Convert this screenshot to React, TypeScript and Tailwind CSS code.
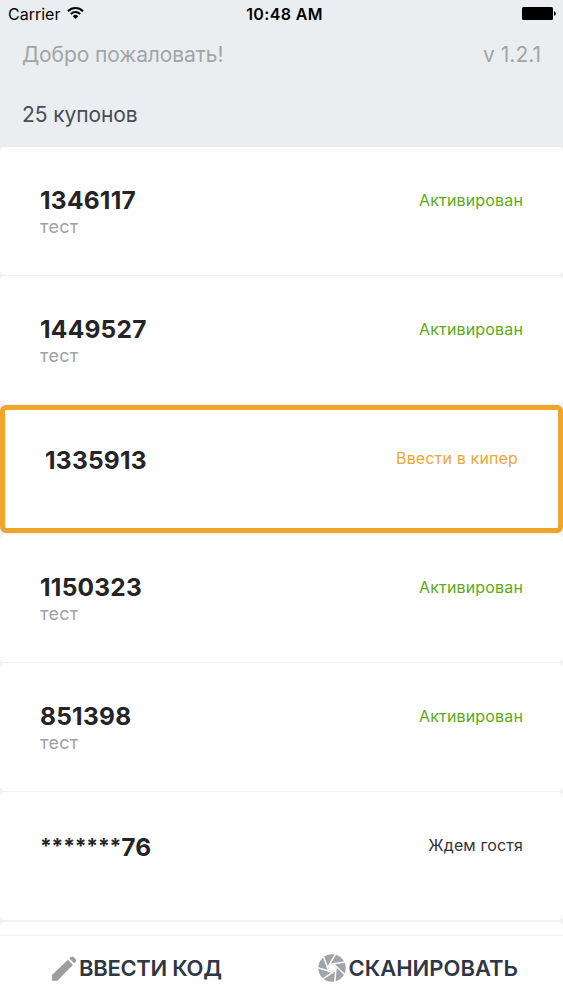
type Coupon = { id: string; note?: string; status: "active" | "enter" | "waiting" };

const coupons: Coupon[] = [
  { id: "1346117", note: "тест", status: "active" },
  { id: "1449527", note: "тест", status: "active" },
  { id: "1335913", status: "enter" },
  { id: "1150323", note: "тест", status: "active" },
  { id: "851398", note: "тест", status: "active" },
  { id: "*******76", status: "waiting" },
];

const statuses = {
  active: { label: "Активирован", className: "text-[#5bab18] tracking-[0.15px]" },
  enter: { label: "Ввести в кипер", className: "text-[#eba83a] tracking-[0.15px]" },
  waiting: { label: "Ждем гостя", className: "text-[#333338] tracking-[0.15px]" },
};

function StatusBar() {
  return (
    <div className="grid h-7 shrink-0 grid-cols-3 items-center pl-2 pr-[7px] text-black">
      <div className="flex items-center gap-[7px]">
        <span className="text-[16px] leading-7">Carrier</span>
        <svg className="-mt-[2px]" width="17" height="12" viewBox="0 0 17 12" fill="none" stroke="currentColor" strokeWidth="2">
          <path d="M1 4.2a10.6 10.6 0 0 1 15 0" />
          <path d="M3.9 7a6.5 6.5 0 0 1 9.2 0" />
          <path d="M8.5 12 5.8 9.2a3.8 3.8 0 0 1 5.4 0Z" fill="currentColor" stroke="none" />
        </svg>
      </div>
      <span className="whitespace-nowrap pl-[5px] text-center text-[16px] font-semibold leading-7 tracking-[0.35px]">10:48 AM</span>
      <svg className="-mt-px justify-self-end" width="34" height="13" viewBox="0 0 34 13">
        <rect width="31" height="13" rx="1.5" />
        <path d="M32 4.2c2.4.6 2.4 4 0 4.6Z" />
      </svg>
    </div>
  );
}

function PencilIcon() {
  return (
    <svg width="25" height="25" viewBox="0 0 25 25" fill="currentColor" className="text-[#9d9da0]">
      <path d="M0 24.7v-5.6L15.9 3.7l5 5L5.5 24.7Z" />
      <path d="m17.3 2.5 1.4-1.4q1.4-1.2 2.8 0l2 2q1.2 1.4 0 2.8l-1.4 1.4Z" />
    </svg>
  );
}

const bladeAngles = Array.from({ length: 7 }, (_, i) => (i * 360) / 7);

function ApertureIcon() {
  return (
    <svg width="28" height="28" viewBox="-14 -14 28 28" className="text-[#a0a3a9]">
      <circle r="13.7" fill="currentColor" />
      <circle r="3.2" fill="white" />
      {bladeAngles.map((angle) => (
        <path key={angle} d="M-1.5-4H14" stroke="white" strokeWidth="1.5" transform={`rotate(${angle - 8})`} />
      ))}
    </svg>
  );
}

function CouponCard({ coupon }: { coupon: Coupon }) {
  const status = statuses[coupon.status];
  const highlighted = coupon.status === "enter";
  const masked = coupon.id.match(/^\*+/)?.[0] ?? "";
  return (
    <li
      className={
        highlighted
          ? "flex h-32 shrink-0 items-start justify-between rounded-md border-[5px] border-[#f0a52a] bg-white px-10 pt-[33px]"
          : "flex h-32 shrink-0 items-start justify-between rounded-[5px] bg-white px-10 pt-[38px]"
      }
    >
      <div className={coupon.note ? "" : "pt-[2px]"}>
        <div className="text-[24.5px] font-bold leading-[30px] tracking-[0.25px] text-[#242428]">
          {masked && <span className="align-[2px] text-[21px] leading-none tracking-[-0.15px]">{masked}</span>}
          {coupon.id.slice(masked.length)}
        </div>
        {coupon.note && <div className="text-[18px] leading-[23px] tracking-[0.3px] text-[#a1a1a6]">{coupon.note}</div>}
      </div>
      <span className={`text-[16px] leading-[30px] ${status.className}`}>{status.label}</span>
    </li>
  );
}

export default function App() {
  return (
    <main className="flex h-[1000px] w-[563px] flex-col overflow-hidden bg-[#ebeef0] font-['Inter',sans-serif]">
      <StatusBar />
      <header className="flex h-[52px] shrink-0 items-center justify-between px-[22px] pt-px text-[21px] text-[#a1a5a7]">
        <span className="tracking-[-0.1px]">Добро пожаловать!</span>
        <span>v 1.2.1</span>
      </header>
      <h1 className="h-[67px] shrink-0 px-[22px] pt-[21px] text-[21px] leading-7 tracking-[-0.1px] text-[#474c57]">25 купонов</h1>
      <ul className="flex min-h-0 flex-1 flex-col gap-[1.1px] overflow-hidden bg-[#f1f1f2]">
        {coupons.map((coupon) => (
          <CouponCard key={coupon.id} coupon={coupon} />
        ))}
        <li className="h-32 shrink-0 rounded-[5px] bg-white" />
      </ul>
      <footer className="flex h-[65px] shrink-0 border-t border-[#eeeef0] bg-white text-[22px] font-semibold text-[#2f3646]">
        <button className="flex items-center gap-[2px] pl-[52px] tracking-[-0.3px]">
          <PencilIcon />
          ВВЕСТИ КОД
        </button>
        <button className="ml-auto flex items-center gap-[3px] pr-[45px]">
          <ApertureIcon />
          СКАНИРОВАТЬ
        </button>
      </footer>
    </main>
  );
}
